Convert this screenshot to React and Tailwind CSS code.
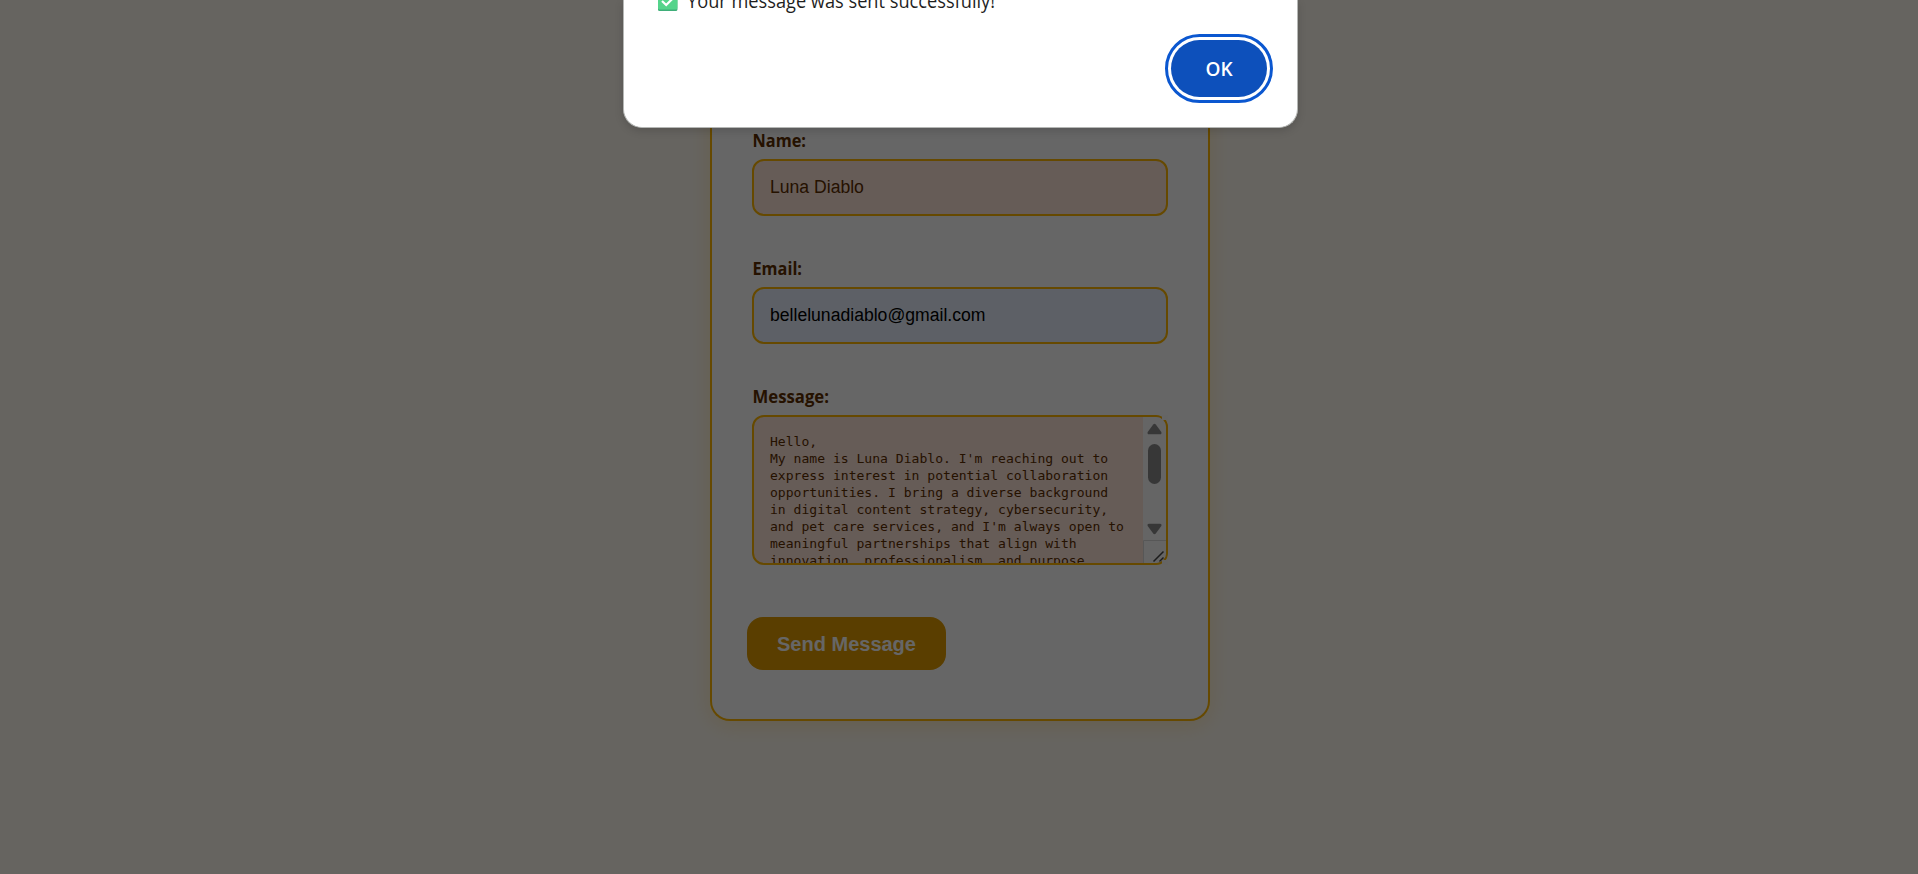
const message = [
  "Hello,",
  "My name is Luna Diablo. I'm reaching out to",
  "express interest in potential collaboration",
  "opportunities. I bring a diverse background",
  "in digital content strategy, cybersecurity,",
  "and pet care services, and I'm always open to",
  "meaningful partnerships that align with",
  "innovation, professionalism, and purpose.",
];

function Label({ children, width }) {
  return (
    <svg className="block h-6 w-40 shrink-0" role="presentation">
      <text
        x="0.5"
        y="18"
        textLength={width}
        lengthAdjust="spacingAndGlyphs"
        className="fill-[#5c2e00] font-['Open_Sans','Noto_Sans',sans-serif] text-[17.8px] font-bold"
      >
        {children}
      </text>
    </svg>
  );
}

function ContactForm() {
  return (
    <form className="flex h-[721px] w-[500px] flex-col rounded-b-[20px] border-2 border-t-0 border-[#ffb700] bg-white px-10 pt-[129px] shadow-[0_4px_20px_rgba(255,183,0,0.2)]">
      <Label width={53.5}>Name:</Label>
      <div className="mt-1.5 flex h-[57px] shrink-0 items-center rounded-xl border-2 border-[#ffb700] bg-[#ffe5d9] px-4 pb-px font-['Liberation_Sans',sans-serif] text-[17.6px] text-[#5c2e00]">
        Luna Diablo
      </div>
      <div className="h-[41px] shrink-0" />
      <Label width={49.5}>Email:</Label>
      <div className="mt-1.5 flex h-[57px] shrink-0 items-center rounded-xl border-2 border-[#ffb700] bg-[#e8f0fe] px-4 pb-px font-['Liberation_Sans',sans-serif] text-[17.6px] text-black">
        bellelunadiablo@gmail.com
      </div>
      <div className="h-[41px] shrink-0" />
      <Label width={76.5}>Message:</Label>
      <div className="relative mt-1.5 shrink-0">
        <div className="flex h-[150px] overflow-hidden rounded-xl border-2 border-[#ffb700] bg-[#ffe5d9]">
          <div className="grow whitespace-pre pl-4 pt-4 font-['DejaVu_Sans_Mono',monospace] text-[13.07px] leading-[17px] text-[#5c2e00]">
            {message.map((line) => (
              <div key={line}>{line}</div>
            ))}
          </div>
          <svg className="h-[146px] w-[23px] shrink-0" viewBox="0 0 23 146">
            <rect width="23" height="146" fill="#fcfcfc" />
            <path d="M10.2 7.5Q11.5 6 12.8 7.5L18.3 15Q19 17.3 17 17.3H6Q4 17.3 4.7 15Z" fill="#8b8b8b" />
            <rect x="5" y="27" width="13" height="40" rx="6.5" fill="#8b8b8b" />
            <path d="M10.2 116.5Q11.5 118 12.8 116.5L18.3 109Q19 106.7 17 106.7H6Q4 106.7 4.7 109Z" fill="#8b8b8b" />
            <path d="M.5 146V123.5H23" fill="none" stroke="#dadada" />
            <path d="M10.5 144.5L20.5 134.5M16.5 144.5L20.5 140.5" stroke="#484848" strokeWidth="1.5" />
          </svg>
        </div>
        <div className="absolute right-0 top-0 h-[5px] w-[6px] bg-[#fdfdfd]" />
        <div className="absolute bottom-0 right-0 h-[5px] w-[6px] bg-[#fdfdfd]" />
      </div>
      <button
        type="button"
        className="-ml-[5px] mt-[52px] h-[53px] w-[199px] shrink-0 whitespace-nowrap rounded-2xl bg-[#e09b00] font-['Liberation_Sans',sans-serif] text-[20px] font-bold text-white"
      >
        Send Message
      </button>
    </form>
  );
}

function SuccessDialog() {
  return (
    <div className="absolute left-[623px] top-0 flex h-[128px] w-[675px] flex-col rounded-b-[19px] border border-t-0 border-[#b5b7b5] bg-white shadow-[0_3px_8px_rgba(0,0,0,0.15)]">
      <svg className="block h-[34px] w-full shrink-0 overflow-visible">
        <rect x="34" y="-9" width="19.4" height="20" rx="1.5" fill="#3fae79" />
        <rect x="34" y="-9" width="19.4" height="18.5" rx="1.5" fill="#55d48b" />
        <path d="M38 1L42.2 5L50.7 -3.5" fill="none" stroke="#fff" strokeWidth="2.2" />
        <text
          x="63"
          y="8"
          textLength="308"
          lengthAdjust="spacingAndGlyphs"
          className="fill-[#1f1f1f] font-['Open_Sans','Noto_Sans',sans-serif] text-[20px]"
        >
          Your message was sent successfully!
        </text>
      </svg>
      <div className="flex justify-end pr-[24px]">
        <div className="rounded-full border-[3px] border-[#0b57d0] bg-white p-[3px]">
          <button
            type="button"
            className="block h-[57px] w-[96px] rounded-full bg-[#0d50bb] pt-0.5 font-['Open_Sans','Noto_Sans',sans-serif] text-[19px] font-semibold text-white"
          >
            OK
          </button>
        </div>
      </div>
    </div>
  );
}

export default function App() {
  return (
    <main className="relative flex h-[874px] w-[1918px] justify-center overflow-hidden bg-[#fffaf0] pl-[2px]">
      <ContactForm />
      <div className="absolute inset-0 bg-black/60" />
      <SuccessDialog />
    </main>
  );
}
